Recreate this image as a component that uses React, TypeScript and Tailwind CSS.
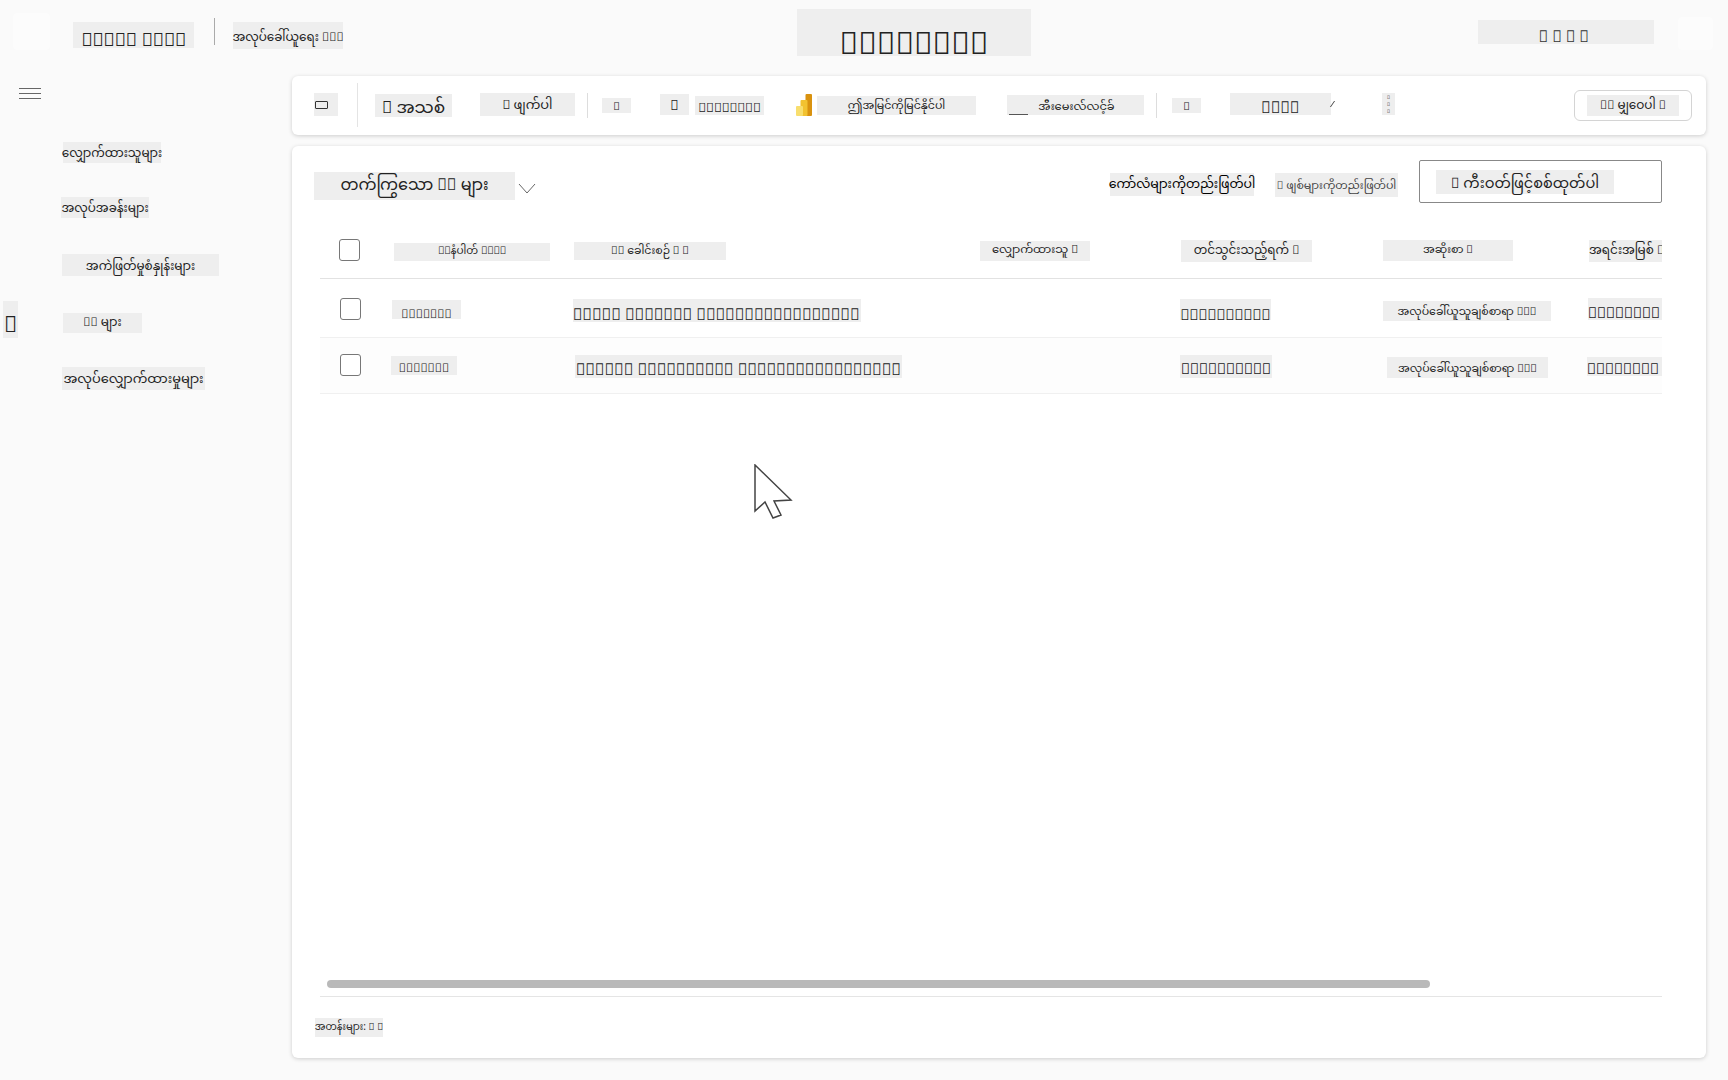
const font = "font-['Noto_Sans_Myanmar','Padauk','Noto_Sans','DejaVu_Sans',sans-serif]";

// glyphs the reference shows as empty boxes
const box = (n: number) => '\uE000'.repeat(n);

function Patch({ className = '', children }: { className?: string; children?: React.ReactNode }) {
  return <div className={`flex items-center justify-center whitespace-nowrap bg-[#eeeeee] text-[#222222] ${className}`}>{children}</div>;
}

function Checkbox({ className = '' }: { className?: string }) {
  return <div className={`w-[21px] h-[22px] bg-white border border-[#777777] rounded-[3px] ${className}`} />;
}

function PowerBi() {
  return (
    <svg width="16" height="22" viewBox="0 0 16 22" className="ml-[32px] mt-[18px]">
      <rect x="9.5" y="0" width="6.5" height="22" rx="1" fill="#d9920f" />
      <rect x="4.5" y="6" width="7" height="16" rx="1" fill="#f2c230" />
      <rect x="0" y="12" width="7" height="10" rx="1" fill="#f8de6e" />
    </svg>
  );
}

export default function App() {
  return (
    <div className={`w-[1728px] h-[1080px] bg-[#fafafa] overflow-hidden relative ${font}`}>
      <header className="h-[76px] flex">
        <div className="w-[37px] h-[37px] mt-[13px] ml-[13px] bg-white/40 rounded" />
        <Patch className="w-[121px] h-[26px] mt-[22px] ml-[23px] text-[18.5px] pt-[15px]">{box(5)} {box(4)}</Patch>
        <div className="w-px h-[27px] mt-[18px] ml-[20px] bg-[#aaaaaa]" />
        <Patch className="w-[110px] h-[27px] mt-[22px] ml-[18px] text-[12px] pt-[4px]">အလုပ်ခေါ်ယူရေး {box(3)}</Patch>
        <Patch className="w-[234px] h-[47px] mt-[9px] ml-[454px] text-[31px] pt-[29px]">{box(8)}</Patch>
        <Patch className="w-[176px] h-[24px] mt-[20px] ml-[447px] text-[16px] tracking-[4px] text-[#333333] pt-[14px]">{box(4)}</Patch>
        <div className="w-[35px] h-[33px] mt-[17px] ml-[24px] bg-white/40 rounded" />
      </header>

      <div className="flex h-[1004px]">
        <aside className="w-[292px] shrink-0 text-[12px]">
          <div className="ml-[19px] mt-[12px] w-[22px] flex flex-col gap-[4px]">
            <div className="h-px bg-[#666666]" />
            <div className="h-px bg-[#666666]" />
            <div className="h-px bg-[#666666]" />
          </div>
          <Patch className="ml-[63px] mt-[43px] w-[98px] h-[21px] pt-[3px]">လျှောက်ထားသူများ</Patch>
          <Patch className="ml-[61px] mt-[34px] w-[88px] h-[21px] pt-[3px]">အလုပ်အခန်းများ</Patch>
          <Patch className="ml-[62px] mt-[36px] w-[157px] h-[22px] pt-[3px]">အကဲဖြတ်မှုစံနှုန်းများ</Patch>
          <div className="flex mt-[25px]">
            <Patch className="ml-[3px] w-[15px] h-[37px] text-[22px] pt-[15px]">{box(1)}</Patch>
            <Patch className="ml-[45px] mt-[12px] w-[79px] h-[20px]">{box(2)} များ</Patch>
          </div>
          <Patch className="ml-[62px] mt-[29px] w-[143px] h-[23px] text-[13px] pt-[4px]">အလုပ်လျှောက်ထားမှုများ</Patch>
        </aside>

        <main className="w-[1414px] flex flex-col">
          <section className="h-[59px] bg-white rounded-md shadow-[0_1px_4px_rgba(0,0,0,0.18)] flex">
            <Patch className="ml-[22px] mt-[17px] w-[24px] h-[23px] justify-start">
              <div className="ml-[1px] w-[13px] h-[8px] border border-[#333333] rounded-[1px]" />
            </Patch>
            <div className="ml-[19px] mt-[7px] w-px h-[44px] bg-[#e4e4e4]" />
            <Patch className="ml-[17px] mt-[18px] w-[77px] h-[23px] text-[17px] pt-[8px]">{box(1)} အသစ်</Patch>
            <Patch className="ml-[28px] mt-[17px] w-[95px] h-[23px] text-[13px] pt-[4px]">{box(1)} ဖျက်ပါ</Patch>
            <div className="ml-[12px] mt-[17px] w-px h-[25px] bg-[#dddddd]" />
            <Patch className="ml-[14px] mt-[22px] w-[29px] h-[15px] text-[11px] pt-[4px]">{box(1)}</Patch>
            <Patch className="ml-[29px] mt-[18px] w-[29px] h-[21px] text-[14px] pt-[4px]">{box(1)}</Patch>
            <Patch className="ml-[6px] mt-[20px] w-[69px] h-[19px] text-[13px] pt-[8px]">{box(8)}</Patch>
            <PowerBi />
            <Patch className="ml-[5px] mt-[20px] w-[159px] h-[19px] text-[11px] pt-[2px]">ဤအမြင်ကိုမြင်နိုင်ပါ</Patch>
            <Patch className="ml-[31px] mt-[19px] w-[137px] h-[20px] text-[11.5px] relative pl-[2px] pt-[5px]">
              <div className="absolute left-[2px] bottom-0 w-[19px] h-px bg-[#555555]" />
              အီးမေးလ်လင့်ခ်
            </Patch>
            <div className="ml-[12px] mt-[17px] w-px h-[25px] bg-[#dddddd]" />
            <Patch className="ml-[15px] mt-[22px] w-[29px] h-[15px] text-[11px] pt-[4px]">{box(1)}</Patch>
            <Patch className="ml-[29px] mt-[17px] w-[101px] h-[22px] text-[16px] pt-[12px]">{box(4)}</Patch>
            <div className="mt-[25px] ml-[1px] w-[6px] h-[6px] border-l border-[#444444] -skew-x-[35deg]" />
            <Patch className="ml-[44px] mt-[17px] w-[13px] h-[22px] text-[5px] leading-[7px] flex-col">
              <span>{box(1)}</span>
              <span>{box(1)}</span>
              <span>{box(1)}</span>
            </Patch>
            <div className="ml-[179px] mt-[14px] w-[118px] h-[31px] border border-[#d4d4d4] rounded-md flex items-center justify-center bg-white">
              <Patch className="w-[92px] h-[21px] text-[12px]">{box(2)} မျှဝေပါ {box(1)}</Patch>
            </div>
          </section>

          <section className="mt-[11px] h-[912px] bg-white rounded-md shadow-[0_1px_4px_rgba(0,0,0,0.18)] flex flex-col">
            <div className="h-[70px] flex shrink-0">
              <Patch className="ml-[22px] mt-[26px] w-[201px] h-[28px] text-[16px] pt-[2px]">တက်ကြွသော {box(2)} များ</Patch>
              <svg width="18" height="11" viewBox="0 0 18 11" className="ml-[3px] mt-[37px]" fill="none" stroke="#666666">
                <path d="M1 1 L9 10 L17 1" />
              </svg>
              <Patch className="ml-[574px] mt-[27px] w-[144px] h-[23px] text-[12.5px] text-black pt-[2px]">ကော်လံများကိုတည်းဖြတ်ပါ</Patch>
              <Patch className="ml-[21px] mt-[27px] w-[123px] h-[24px] text-[11px] text-[#444444] pt-[3px]">{box(1)} ဖျစ်များကိုတည်းဖြတ်ပါ</Patch>
              <div className="ml-[21px] mt-[14px] w-[243px] h-[43px] border border-[#888888] rounded-[2px] flex items-center pl-[16px]">
                <Patch className="w-[178px] h-[24px] text-[14.5px] pt-[6px]">{box(1)} ကီးဝတ်ဖြင့်စစ်ထုတ်ပါ</Patch>
              </div>
            </div>

            <div className="mx-[28px] w-[1342px] flex-1 flex flex-col overflow-hidden">
              <div className="h-[63px] shrink-0 border-b border-[#e2e2e2] grid grid-cols-[72px_181px_407px_200px_203px_203px_76px] text-[12px]">
                <Checkbox className="ml-[19px] mt-[23px]" />
                <Patch className="w-[156px] h-[18px] mt-[27px] ml-[2px] text-[10.5px]">{box(2)}နံပါတ် {box(4)}</Patch>
                <Patch className="w-[152px] h-[18px] mt-[26px] ml-[1px] text-[11px]">{box(2)} ခေါင်းစဉ် {box(1)} {box(1)}</Patch>
                <Patch className="w-[110px] h-[20px] mt-[25px] text-[11.5px]">လျှောက်ထားသူ {box(1)}</Patch>
                <Patch className="w-[131px] h-[22px] mt-[24px] ml-[1px]">တင်သွင်းသည့်ရက် {box(1)}</Patch>
                <Patch className="w-[130px] h-[21px] mt-[24px] text-[11px]">အဆိုးစာ {box(1)}</Patch>
                <Patch className="h-[22px] mt-[24px] ml-[3px] justify-start">အရင်းအမြစ် {box(1)}</Patch>
              </div>
              <div className="h-[59px] shrink-0 border-b border-[#f0f0f0] grid grid-cols-[72px_181px_407px_200px_203px_203px_76px]">
                <Checkbox className="ml-[20px] mt-[19px]" />
                <Patch className="w-[69px] h-[19px] mt-[21px] text-[12px] pt-[10px]">{box(7)}</Patch>
                <Patch className="w-[288px] h-[23px] mt-[20px] text-[16px] justify-start pt-[13px]">{box(5)} {box(7)} {box(17)}</Patch>
                <div />
                <Patch className="w-[91px] h-[21px] mt-[20px] text-[15px] pt-[15px]">{box(10)}</Patch>
                <Patch className="w-[168px] h-[20px] mt-[22px] text-[11px] pt-[3px]">အလုပ်ခေါ်ယူသူချစ်စာရာ {box(3)}</Patch>
                <Patch className="h-[22px] mt-[19px] ml-[2px] text-[15px] justify-start pt-[13px]">{box(8)}</Patch>
              </div>
              <div className="h-[56px] shrink-0 border-b border-[#f0f0f0] bg-[#fdfdfd] grid grid-cols-[72px_181px_407px_200px_203px_203px_76px]">
                <Checkbox className="ml-[20px] mt-[16px]" />
                <Patch className="w-[66px] h-[19px] mt-[18px] -ml-[1px] text-[12px] pt-[6px]">{box(7)}</Patch>
                <Patch className="w-[327px] h-[23px] mt-[17px] ml-[2px] text-[16px] pt-[10px]">{box(6)} {box(10)} {box(17)}</Patch>
                <div />
                <Patch className="w-[92px] h-[23px] mt-[17px] text-[15px] pt-[10px]">{box(10)}</Patch>
                <Patch className="w-[161px] h-[21px] mt-[19px] ml-[4px] text-[11px] pt-[3px]">အလုပ်ခေါ်ယူသူချစ်စာရာ {box(3)}</Patch>
                <Patch className="h-[19px] mt-[19px] ml-[1px] text-[15px] justify-start pt-[10px]">{box(8)}</Patch>
              </div>
              <div className="flex-1" />
              <div className="ml-[7px] w-[1103px] h-[8px] rounded-full bg-[#b9b9b9] shrink-0" />
              <div className="mt-[8px] h-px bg-[#e5e5e5] shrink-0" />
            </div>

            <div className="h-[61px] shrink-0">
              <Patch className="ml-[23px] mt-[21px] w-[68px] h-[19px] text-[10px] pt-[2px]">အတန်းများ: {box(1)} {box(1)}</Patch>
            </div>
          </section>
        </main>
      </div>

      <svg width="40" height="58" viewBox="0 0 40 58" className="absolute left-[754px] top-[464px]" fill="white" stroke="#444444" strokeWidth="1.5">
        <path d="M1 1 L1 47 L11 38 L19 54 L27 51 L20 37 L37 36 Z" />
      </svg>
    </div>
  );
}
